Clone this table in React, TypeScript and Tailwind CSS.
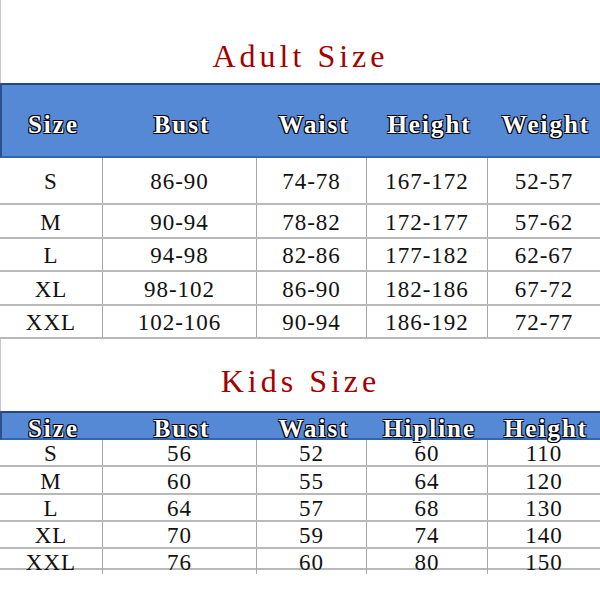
const cols = 'grid grid-cols-[103px_154px_110px_121px_112px]';

const adultHead = ['Size', 'Bust', 'Waist', 'Height', 'Weight'];
const adultRows = [
  ['S', '86-90', '74-78', '167-172', '52-57'],
  ['M', '90-94', '78-82', '172-177', '57-62'],
  ['L', '94-98', '82-86', '177-182', '62-67'],
  ['XL', '98-102', '86-90', '182-186', '67-72'],
  ['XXL', '102-106', '90-94', '186-192', '72-77'],
];
const adultHeights = ['h-[47px]', 'h-[34px]', 'h-[33px]', 'h-[34px]', 'h-[33px]'];

const kidsHead = ['Size', 'Bust', 'Waist', 'Hipline', 'Height'];
const kidsRows = [
  ['S', '56', '52', '60', '110'],
  ['M', '60', '55', '64', '120'],
  ['L', '64', '57', '68', '130'],
  ['XL', '70', '59', '74', '140'],
  ['XXL', '76', '60', '80', '150'],
];
const kidsHeights = ['h-[27px]', 'h-[28px]', 'h-[27px]', 'h-[27px]', 'h-[21px]'];

const outline =
  '[text-shadow:-1px_-1px_0_#000,1px_-1px_0_#000,-1px_1px_0_#000,1px_1px_0_#000]';

function Title({ text, className }: { text: string; className: string }) {
  return (
    <div className={`flex justify-center border-l border-[#c8c8c8] ${className}`}>
      <span className="font-['Liberation_Serif',serif] text-[32px] tracking-[4px] leading-none text-[#a30000]">
        {text}
      </span>
    </div>
  );
}

function Header({ labels, height, pad }: { labels: string[]; height: string; pad: string }) {
  return (
    <div
      className={`${cols} ${height} bg-[#5589d6] border-t-2 border-b-2 border-t-[#24478a] border-b-[#3465b0] border-l-2 border-l-[#2b4f8f]`}
    >
      {labels.map((l) => (
        <div key={l} className={`flex items-center justify-center ${pad}`}>
          <span
            className={`font-['Liberation_Serif',serif] font-bold text-[25px] tracking-[2px] leading-none text-white ${outline}`}
          >
            {l}
          </span>
        </div>
      ))}
    </div>
  );
}

function Rows({ rows, heights }: { rows: string[][]; heights: string[] }) {
  return (
    <div>
      {rows.map((r, i) => (
        <div key={r[0]} className={`${cols} ${heights[i]} border-b-2 border-[#b8b8b8]`}>
          {r.map((c, j) => (
            <div
              key={j}
              className={`flex items-center justify-center pt-[2px] ${j < 4 ? 'border-r border-[#a8a8a8]' : ''}`}
            >
              <span className="font-['Liberation_Serif',serif] text-[23px] tracking-[1px] leading-none text-[#111]">
                {c}
              </span>
            </div>
          ))}
        </div>
      ))}
    </div>
  );
}

export default function App() {
  return (
    <div className="w-[600px] h-[600px] bg-white flex flex-col overflow-hidden">
      <Title text="Adult Size" className="h-[83px] items-start pt-[40px]" />
      <Header labels={adultHead} height="h-[75px]" pad="pt-[8px]" />
      <Rows rows={adultRows} heights={adultHeights} />
      <Title text="Kids Size" className="h-[72px] items-start pt-[26px]" />
      <Header labels={kidsHead} height="h-[29px]" pad="pt-[3px]" />
      <Rows rows={kidsRows} heights={kidsHeights} />
    </div>
  );
}
